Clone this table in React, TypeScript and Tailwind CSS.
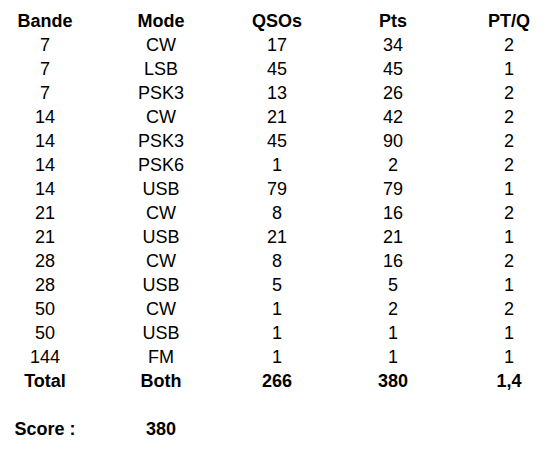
const rows: [string, string, string, string, string][] = [
  ["7", "CW", "17", "34", "2"],
  ["7", "LSB", "45", "45", "1"],
  ["7", "PSK3", "13", "26", "2"],
  ["14", "CW", "21", "42", "2"],
  ["14", "PSK3", "45", "90", "2"],
  ["14", "PSK6", "1", "2", "2"],
  ["14", "USB", "79", "79", "1"],
  ["21", "CW", "8", "16", "2"],
  ["21", "USB", "21", "21", "1"],
  ["28", "CW", "8", "16", "2"],
  ["28", "USB", "5", "5", "1"],
  ["50", "CW", "1", "2", "2"],
  ["50", "USB", "1", "1", "1"],
  ["144", "FM", "1", "1", "1"],
];

function Row({ cells, bold }: { cells: string[]; bold?: boolean }) {
  return (
    <>
      {cells.map((c, i) => (
        <div
          key={i}
          className={
            "text-center h-6 whitespace-nowrap " +
            (bold ? "font-bold " : "") +
            (i === 0 ? "pr-[13px]" : i === 4 ? "pl-[16px]" : "")
          }
        >
          {c}
        </div>
      ))}
    </>
  );
}

export default function App() {
  return (
    <div
      className="w-[551px] h-[456px] bg-white text-black text-[18px] leading-6 pt-[9px] overflow-hidden"
      style={{ fontFamily: '"Liberation Sans", Arial, sans-serif' }}
    >
      <div className="grid grid-cols-[103px_116px_116px_116px_100px]">
        <Row cells={["Bande", "Mode", "QSOs", "Pts", "PT/Q"]} bold />
        {rows.map((r, i) => (
          <Row key={i} cells={r} />
        ))}
        <Row cells={["Total", "Both", "266", "380", "1,4"]} bold />
      </div>
      <div className="grid grid-cols-[103px_116px] mt-[24px]">
        <div className="text-center h-6 font-bold pr-[13px] whitespace-nowrap">Score :</div>
        <div className="text-center h-6 font-bold">380</div>
      </div>
    </div>
  );
}
